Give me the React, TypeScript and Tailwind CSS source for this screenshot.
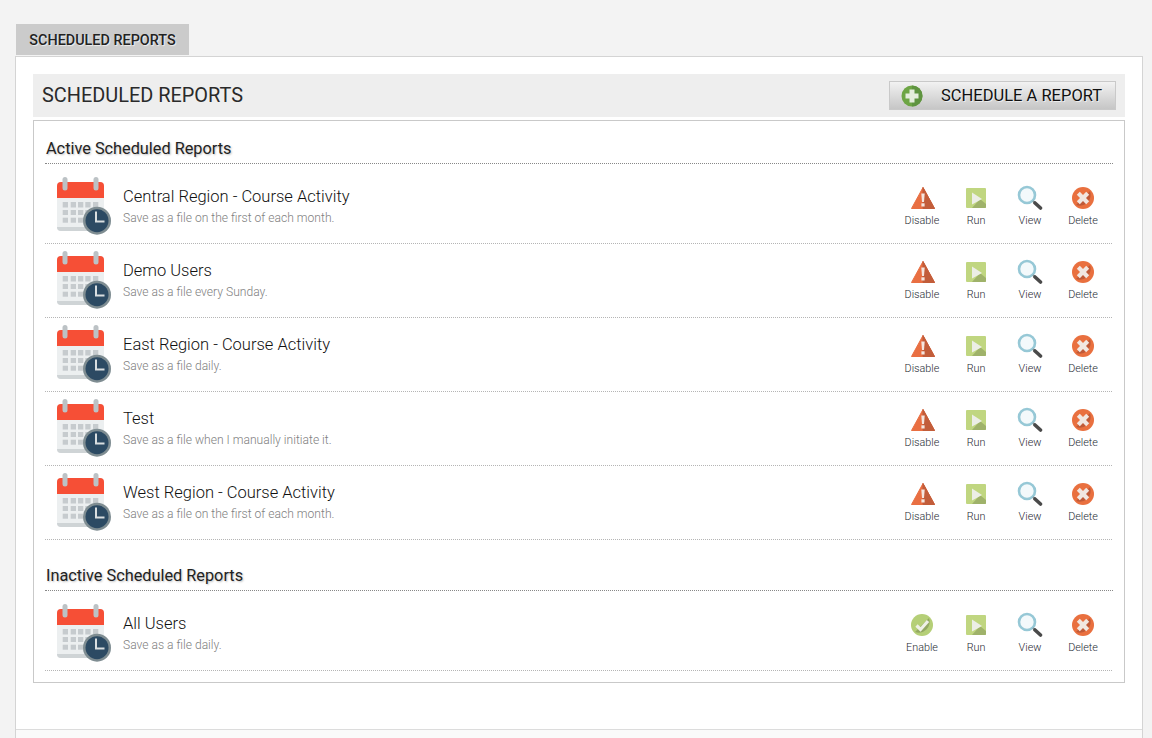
/**
 * App.tsx — Scheduled Reports page
 */

type Report = { name: string; note: string };

const active: Report[] = [
  { name: "Central Region - Course Activity", note: "Save as a file on the first of each month." },
  { name: "Demo Users", note: "Save as a file every Sunday." },
  { name: "East Region - Course Activity", note: "Save as a file daily." },
  { name: "Test", note: "Save as a file when I manually initiate it." },
  { name: "West Region - Course Activity", note: "Save as a file on the first of each month." },
];

const inactive: Report[] = [{ name: "All Users", note: "Save as a file daily." }];

// ── Icons ────────────────────────────────────────────────────
function CalendarIcon() {
  return (
    <svg width="56" height="58" viewBox="0 0 56 58" className="block">
      <rect x="1" y="5" width="47" height="49" rx="4" fill="#eceff0" />
      <path d="M1 50h47a4 4 0 0 1-4 4H5a4 4 0 0 1-4-4z" fill="#cfd4d6" />
      <path d="M5 5h39a4 4 0 0 1 4 4v12H1V9a4 4 0 0 1 4-4z" fill="#f64f36" />
      <rect x="6.500" y="0" width="5" height="13.500" rx="2.500" fill="#bcc2c5" />
      <rect x="37.500" y="0" width="5" height="13.500" rx="2.500" fill="#bcc2c5" />
      <g fill="#c6cbce">
        <rect x="6.700" y="25" width="5.300" height="5.500" />
        <rect x="14.700" y="25" width="5.300" height="5.500" />
        <rect x="22" y="25" width="5.300" height="5.500" />
        <rect x="29.300" y="25" width="5.300" height="5.500" />
        <rect x="37" y="25" width="5.300" height="5.500" />
        <rect x="6.700" y="33" width="5.300" height="5" />
        <rect x="14.700" y="33" width="5.300" height="5" />
        <rect x="22" y="33" width="5.300" height="5" />
        <rect x="29.300" y="33" width="5.300" height="5" />
        <rect x="6.700" y="40.700" width="5.300" height="5" />
        <rect x="14.700" y="40.700" width="5.300" height="5" />
        <rect x="22" y="40.700" width="5.300" height="5" />
      </g>
      <circle cx="41" cy="43.700" r="14" fill="#7f8d92" />
      <circle cx="41" cy="43.700" r="11.500" fill="#2c4a63" />
      <path d="M40 34.500v10h8.500" fill="none" stroke="#d9dee0" strokeWidth="2" />
    </svg>
  );
}

function PlusIcon() {
  return (
    <svg width="22" height="22" viewBox="0 0 22 22" className="block">
      <circle cx="11" cy="11" r="10.500" fill="#6da544" />
      <path d="M11 .5a10.500 10.500 0 0 1 0 21z" fill="#5f9440" />
      <path d="M8.500 4.500h5v4h4v5h-4v4h-5v-4h-4v-5h4z" fill="#e4eddc" />
    </svg>
  );
}

function WarnIcon() {
  return (
    <svg width="26" height="24" viewBox="0 0 26 24" className="ml-[1px] block">
      <path d="M13 1.500 24.500 22.500h-23z" fill="#e96f42" stroke="#e96f42" strokeLinejoin="round" />
      <path d="M13 1.500 24.500 22.500H13z" fill="#c25d3a" stroke="#c25d3a" strokeLinejoin="round" />
      <path d="M11.300 7.500h3.400l-.7 8.500h-2z" fill="#f4e6df" />
      <rect x="11.400" y="17.300" width="3.200" height="3.200" fill="#f4e6df" />
    </svg>
  );
}

function EnableIcon() {
  return (
    <svg width="22" height="22" viewBox="0 0 22 22" className="block">
      <circle cx="11" cy="11" r="11" fill="#b5cf77" />
      <path d="M4 18 18 4a11 11 0 0 1-14 14z" fill="#93a862" />
      <path d="m5.500 11.500 4 4 7.500-8.500" fill="none" stroke="#eef0e6" strokeWidth="3.200" />
    </svg>
  );
}

function RunIcon() {
  return (
    <svg width="20" height="20" viewBox="0 0 20 20" className="block">
      <rect width="20" height="20" rx="1" fill="#c0d680" />
      <path d="M20 19a1 1 0 0 1-1 1H6l8-9 6 5z" fill="#9fb26a" />
      <path d="M6 4.500 16 11 6 16.500z" fill="#eceee6" />
    </svg>
  );
}

function ViewIcon() {
  return (
    <svg width="26" height="26" viewBox="0 0 26 26" className="block">
      <circle cx="10" cy="10" r="8" fill="#f3f9fb" stroke="#96c8d6" strokeWidth="2.600" />
      <path d="m16 16 2 2" stroke="#8a9aa0" strokeWidth="2" />
      <path d="m18 18 5.500 5" stroke="#4a4a4a" strokeWidth="3.600" strokeLinecap="round" />
    </svg>
  );
}

function DeleteIcon() {
  return (
    <svg width="22" height="22" viewBox="0 0 22 22" className="block">
      <circle cx="11" cy="11" r="11" fill="#e9703f" />
      <path d="M4 18 18 4a11 11 0 0 1-14 14z" fill="#c05a38" />
      <path
        d="M7.800 4.800 11 8l3.200-3.200 3 3L14 11l3.200 3.200-3 3L11 14l-3.200 3.200-3-3L8 11 4.800 7.800z"
        fill="#f1e7e1"
      />
    </svg>
  );
}

// ── Row parts ────────────────────────────────────────────────
function Action({ icon, label, className }: { icon: React.ReactNode; label: string; className: string }) {
  return (
    <div className={`flex flex-col items-center ${className}`}>
      <div className="flex h-[26px] items-center">{icon}</div>
      <span className="mt-[3px] text-[10.8px] leading-[14px] font-light text-[#1f2a33]">{label}</span>
    </div>
  );
}

function ReportRow({ report, enabled }: { report: Report; enabled?: boolean }) {
  return (
    <div className="mr-[1px] flex h-[74px] items-start border-b border-dotted border-[#b5b5b5] pt-[7px]">
      <div className="ml-[11px] w-[67px] shrink-0">
        <CalendarIcon />
      </div>
      <div className="pt-[10px]">
        <div className="text-[16.5px] leading-[20px] font-light text-[#111]">{report.name}</div>
        <div className="mt-[3px] text-[12.1px] leading-[16px] font-light text-[#808080]">{report.note}</div>
      </div>
      <div className="ml-auto mr-[3px] flex items-start pt-[8px]">
        {enabled ? (
          <Action icon={<EnableIcon />} label="Enable" className="w-[54px]" />
        ) : (
          <Action icon={<WarnIcon />} label="Disable" className="w-[54px]" />
        )}
        <Action icon={<RunIcon />} label="Run" className="w-[54px]" />
        <Action icon={<ViewIcon />} label="View" className="w-[54px]" />
        <Action icon={<DeleteIcon />} label="Delete" className="w-[52px]" />
      </div>
    </div>
  );
}

function Section({ title, reports, enabled }: { title: string; reports: Report[]; enabled?: boolean }) {
  return (
    <section>
      <h3 className="border-b border-dotted border-[#888] pb-[4px] pl-[1px] text-[16.3px] leading-[20px] font-normal text-[#222] [text-shadow:1px_1px_2px_rgba(0,0,0,0.25)]">
        {title}
      </h3>
      <div className="pt-[6px]">
        {reports.map((r) => (
          <ReportRow key={r.name} report={r} enabled={enabled} />
        ))}
      </div>
    </section>
  );
}

export default function App() {
  return (
    <div className="h-[738px] overflow-hidden bg-[#f3f3f3] font-['Roboto',sans-serif]">
      <div className="pl-[15px] pr-[9px] pt-[24px]">
        {/* ── Tab ── */}
        <div className="ml-[1px] flex h-[31px] w-[173px] items-center justify-center bg-[#cbcbcb] pt-[3px] text-[14.400px] font-medium text-[#222] [text-shadow:1px_1px_1px_rgba(255,255,255,0.7)]">
          SCHEDULED REPORTS
        </div>

        {/* ── Card ── */}
        <div className="mt-[1px] h-[700px] border border-[#d4d4d4] bg-white px-[17px] pt-[17px]">
          <div className="flex h-[43px] items-center justify-between bg-[#eeeeee] pl-[9px] pr-[9px]">
            <h2 className="text-[19.900px] font-normal text-[#2a2a2a]">SCHEDULED REPORTS</h2>
            <button className="flex h-[29px] w-[227px] items-center border border-[#c9c9c9] bg-gradient-to-b from-[#f2f2f2] to-[#c6c6c6] pl-[11px] text-[16.500px] text-[#111] [text-shadow:1px_1px_0_rgba(255,255,255,0.6)]">
              <PlusIcon />
              <span className="ml-[18px] pt-[2px]">SCHEDULE A REPORT</span>
            </button>
          </div>

          <div className="mt-[3px] h-[563px] border border-[#c9c9c9] px-[11px] pt-[18px]">
            <Section title="Active Scheduled Reports" reports={active} />
            <div className="mt-[26px]">
              <Section title="Inactive Scheduled Reports" reports={inactive} enabled />
            </div>
          </div>

          {/* ── Footer rule ── */}
          <div className="mx-[-17px] mt-[46px] h-[20px] border-t border-[#dcdcdc] bg-[#fafafa]" />
        </div>
      </div>
    </div>
  );
}
